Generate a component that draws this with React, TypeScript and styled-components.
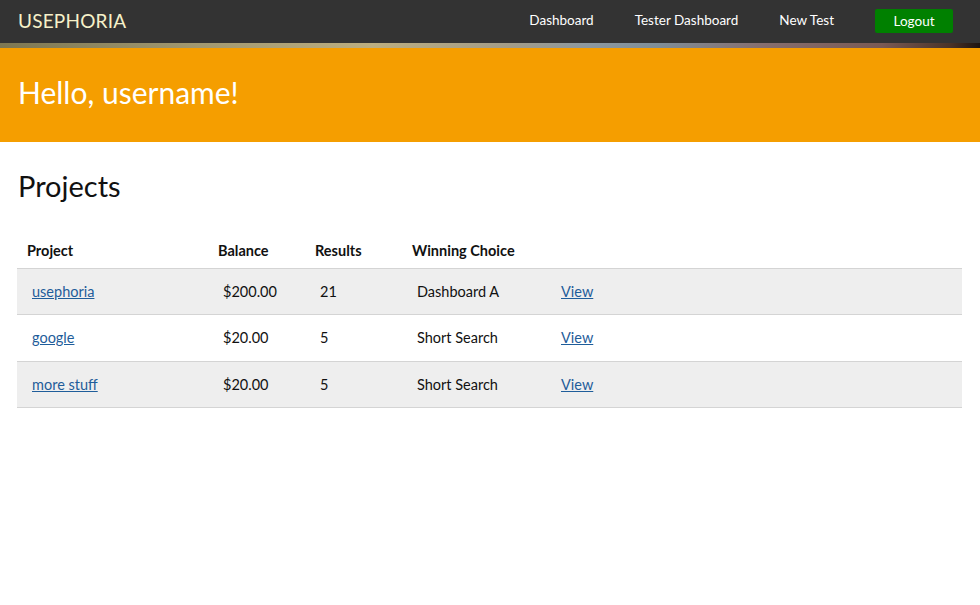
import React from "react";
import styled, { createGlobalStyle } from "styled-components";

const Global = createGlobalStyle`
  html, body { margin: 0; padding: 0; background: #fff; }
  body { font-family: "Lato", "Open Sans", sans-serif; color: #111; }
  * { box-sizing: border-box; }
`;

const NavBar = styled.header`
  background: #333;
  height: 43px;
  display: flex;
  align-items: center;
  padding: 0 27px 3px 18px;
`;

const Brand = styled.div`
  color: #f6f1c9;
  font-size: 19px;
  letter-spacing: 0.2px;
  flex: 1;
`;

const NavLinks = styled.nav`
  display: flex;
  align-items: center;
`;

const NavLink = styled.a`
  color: #fff;
  font-size: 13.5px;
  text-decoration: none;
  margin-right: 41px;
`;

const LogoutButton = styled.button`
  background: #008000;
  color: #fff;
  border: none;
  border-radius: 2px;
  width: 78px;
  height: 24px;
  font-family: inherit;
  font-size: 13.5px;
  padding: 0;
  margin-top: 1px;
`;

const Strip = styled.div`
  height: 5px;
  background: linear-gradient(
    to right,
    #7d7752 0%,
    #a19870 20%,
    #bcae80 38%,
    #a39c88 52%,
    #8c98a0 60%,
    #7f8e98 67%,
    #866e6e 78%,
    #7a5a54 90%,
    #4a3328 97%,
    #1e1410 100%
  );
`;

const Hero = styled.section`
  background: #f59e00;
  height: 94px;
  display: flex;
  align-items: center;
  padding: 0 18px 6px;
`;

const Greeting = styled.h1`
  margin: 0;
  color: #fff;
  font-weight: 400;
  font-size: 30px;
`;

const Main = styled.main`
  padding: 26px 18px 0 17px;
`;

const Title = styled.h2`
  margin: 0 0 0 1px;
  font-weight: 400;
  font-size: 29px;
  line-height: 36px;
`;

const Table = styled.table`
  margin-top: 30px;
  width: 945px;
  border-collapse: collapse;
  font-size: 14.5px;
`;

const Th = styled.th<{ $w?: number }>`
  text-align: left;
  font-weight: 700;
  padding: 0 0 9px 10px;
  height: 34px;
  vertical-align: bottom;
  border-bottom: 1px solid #d4d4d4;
  width: ${(p) => (p.$w ? `${p.$w}px` : "auto")};
`;

const Row = styled.tr<{ $alt: boolean }>`
  background: ${(p) => (p.$alt ? "#eeeeee" : "#fff")};
  border-bottom: 1px solid #d4d4d4;
`;

const Td = styled.td`
  height: 46.5px;
  padding: 0 0 0 15px;
  vertical-align: middle;
`;

const Link = styled.a`
  color: #1f5d9a;
  text-decoration: underline;
`;

const rows = [
  { name: "usephoria", balance: "$200.00", results: "21", choice: "Dashboard A" },
  { name: "google", balance: "$20.00", results: "5", choice: "Short Search" },
  { name: "more stuff", balance: "$20.00", results: "5", choice: "Short Search" },
];

export default function App() {
  return (
    <>
      <Global />
      <NavBar>
        <Brand>USEPHORIA</Brand>
        <NavLinks>
          <NavLink href="#">Dashboard</NavLink>
          <NavLink href="#">Tester Dashboard</NavLink>
          <NavLink href="#">New Test</NavLink>
          <LogoutButton>Logout</LogoutButton>
        </NavLinks>
      </NavBar>
      <Strip />
      <Hero>
        <Greeting>Hello, username!</Greeting>
      </Hero>
      <Main>
        <Title>Projects</Title>
        <Table>
          <thead>
            <tr>
              <Th $w={191}>Project</Th>
              <Th $w={97}>Balance</Th>
              <Th $w={97}>Results</Th>
              <Th $w={144}>Winning Choice</Th>
              <Th />
            </tr>
          </thead>
          <tbody>
            {rows.map((r, i) => (
              <Row key={r.name} $alt={i % 2 === 0}>
                <Td>
                  <Link href="#">{r.name}</Link>
                </Td>
                <Td>{r.balance}</Td>
                <Td>{r.results}</Td>
                <Td>{r.choice}</Td>
                <Td>
                  <Link href="#">View</Link>
                </Td>
              </Row>
            ))}
          </tbody>
        </Table>
      </Main>
    </>
  );
}
